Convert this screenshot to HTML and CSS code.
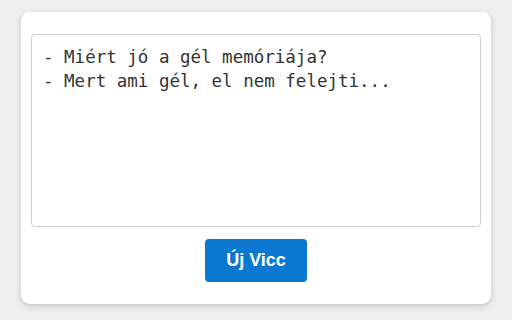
FILE: index.html
```html
<!DOCTYPE html>
<html lang="hu">
<head>
<meta charset="utf-8">
<link rel="stylesheet" href="styles.css">
</head>
<body>
<div class="card">
  <textarea class="joke" readonly>- Miért jó a gél memóriája?
- Mert ami gél, el nem felejti...</textarea>
  <button class="btn">Új Vicc</button>
</div>
</body>
</html>
```
FILE: styles.css
```css
html, body {
  margin: 0;
  padding: 0;
}
body {
  background: #efefef;
  width: 512px;
  height: 320px;
  padding: 12px 21px 0 21px;
  box-sizing: border-box;
}
.card {
  background: #ffffff;
  border-radius: 9px;
  box-shadow: 0 2px 6px rgba(0, 0, 0, 0.18);
  height: 292px;
  box-sizing: border-box;
  padding: 22px 10px 22px 10px;
  display: flex;
  flex-direction: column;
  align-items: center;
  gap: 12px;
}
.joke {
  width: 450px;
  height: 193px;
  box-sizing: border-box;
  border: 1px solid #cfcfcf;
  border-radius: 4px;
  padding: 10px 11px;
  margin: 0;
  resize: none;
  font-family: "DejaVu Sans Mono", monospace;
  font-size: 17.5px;
  line-height: 24px;
  color: #333;
  background: #fff;
  outline: none;
}
.btn {
  width: 102px;
  height: 43px;
  background: #0a78d0;
  color: #fff;
  border: none;
  border-radius: 4px;
  font-family: "Liberation Sans", Arial, sans-serif;
  font-size: 18px;
  font-weight: 600;
  cursor: pointer;
}
```
